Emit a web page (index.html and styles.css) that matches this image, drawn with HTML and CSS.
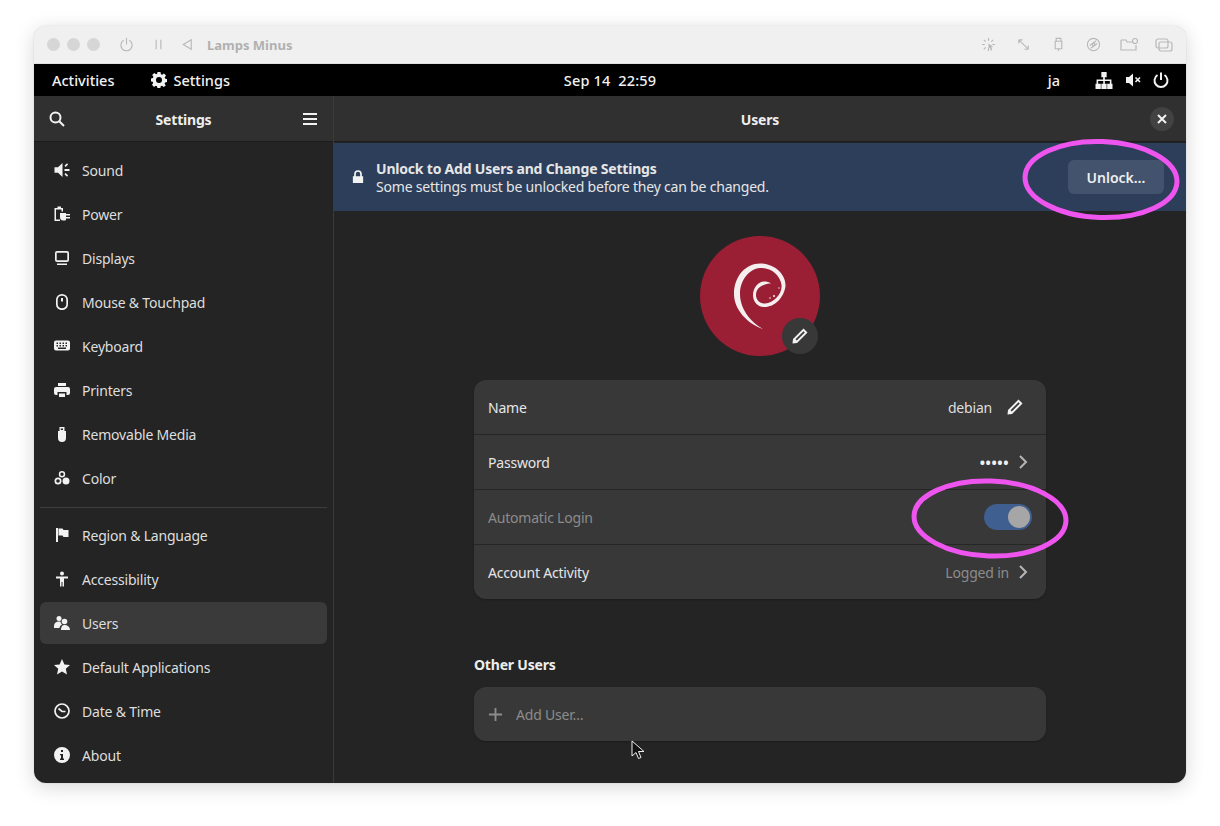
FILE: index.html
```html
<!DOCTYPE html>
<html>
<head>
  <title>Users - Settings</title>
  <link rel="stylesheet" href="styles.css">
</head>
<body>
  <div class="vm-window">
    <div class="vm-bar">
      <span class="light"></span><span class="light"></span><span class="light"></span>
      <svg class="vm-icon first" viewBox="0 0 16 16"><path d="M5 3.500a6 6 0 1 0 6 0M8 1v7"/></svg>
      <svg class="vm-icon pause" viewBox="0 0 16 16"><path d="M5.500 3v10M10.500 3v10"/></svg>
      <svg class="vm-icon back" viewBox="0 0 16 16"><path d="M12 3v10L3.500 8z"/></svg>
      <span class="vm-name">Lamps Minus</span>
      <div class="vm-tools">
        <svg class="vm-icon" viewBox="0 0 16 16"><path d="M8 1v3M8 12v3M1 8h3M12 8h3M3 3l2 2M13 3l-2 2M3 13l2-2"/><path class="solid" d="M8 7l5 3.500-2 .5 1 3-1.500.5-1-3-1.500 1z"/></svg>
        <svg class="vm-icon" viewBox="0 0 16 16"><path d="M3 3l10 10M3 3v4M3 3h4M13 13V9M13 13H9"/></svg>
        <svg class="vm-icon" viewBox="0 0 16 16"><path d="M5.500 1.500h5v3h-5zM4.500 4.500h7v8h-7zM8 12.500V15"/></svg>
        <svg class="vm-icon" viewBox="0 0 16 16"><circle cx="8" cy="8" r="6.500"/><circle cx="8" cy="8" r="1.500"/><path d="M4 9l7-5M5 12l7-5"/></svg>
        <svg class="vm-icon wide" viewBox="0 0 18 16"><path d="M1 3h5l1 2h6M1 3v10h15V8"/><circle cx="15" cy="4" r="2.500"/></svg>
        <svg class="vm-icon wide" viewBox="0 0 18 16"><rect x="1" y="2" width="12" height="9" rx="2"/><rect x="4" y="5" width="13" height="9" rx="2"/></svg>
      </div>
    </div>

    <div class="panel">
      <div class="panel-left">
        <span>Activities</span>
        <span class="panel-app">
          <svg class="icon" viewBox="0 0 16 16"><path fill-rule="evenodd" d="M6.500 0h3l.4 2.200 1.300.6L13 1.500 15 3.600l-1.300 1.800.6 1.300 1.700.3v3l-1.900.4-.5 1.300 1.200 1.800L12.700 15l-1.700-1.200-1.300.5-.3 1.700h-3l-.4-1.800-1.300-.5L3 15l-2-2.200 1.200-1.700-.5-1.300L0 9.500v-3l1.900-.4.500-1.300L1.200 3 3.300 1l1.800 1.300 1.100-.5zM8 5a3 3 0 1 0 0 6 3 3 0 0 0 0-6z"/></svg>
          Settings
        </span>
      </div>
      <div class="panel-clock">Sep 14&nbsp; 22:59</div>
      <div class="panel-right">
        <span class="panel-lang">ja</span>
        <svg class="icon net" viewBox="0 0 16 16"><path d="M5.500 0h5v5H8.800v2H15v4h1v5h-5v-5h2.500V8.500H8.800V11H10.500v5h-5v-5h1.800V8.500H2.500V11H5v5H0v-5h1V7h6.200V5H5.500z"/></svg>
        <svg class="icon mute" viewBox="0 0 16 16"><path d="M8 1.500v13L4 11H1V5h3z"/><path class="mute-x" d="M10.500 5.500L15 10M15 5.500L10.500 10"/></svg>
        <svg class="icon line" viewBox="0 0 16 16"><path d="M4.500 3a6.500 6.500 0 1 0 7 0M8 .5V8"/></svg>
      </div>
    </div>

    <div class="app">
      <aside class="sidebar">
        <header class="side-head">
          <svg class="icon line" viewBox="0 0 16 16"><circle cx="6.500" cy="6.500" r="5"/><path d="M10.200 10.200L15 15"/></svg>
          <span class="head-title">Settings</span>
          <svg class="icon line" viewBox="0 0 16 16"><path d="M1 3h14M1 8h14M1 13h14"/></svg>
        </header>
        <nav class="side-list">
          <a class="side-row"><svg class="icon" viewBox="0 0 16 16"><path d="M8.500 1v14L4 10.800H.5V5.200H4zM10.500 3.800l2.500-2.500 1.100 1.100-2.500 2.500zM10.500 12.200l2.500 2.500 1.100-1.100-2.500-2.500zM10.500 7h5v2h-5z"/></svg>Sound</a>
          <a class="side-row"><svg class="icon" viewBox="0 0 16 16"><path d="M3.500.5H7V2h2v3.500H7.500v-2H2v10h4V15H.5V2h3z"/><path d="M6 7h6v1h4v1.500h-4V11h4v1.500h-4v1c0 .5-.5 1-1 1H9c-2 0-3-1.500-3-3.500z"/></svg>Power</a>
          <a class="side-row"><svg class="icon" viewBox="0 0 16 16"><path fill-rule="evenodd" d="M3 1h10a2 2 0 0 1 2 2v7a2 2 0 0 1-2 2H3a2 2 0 0 1-2-2V3a2 2 0 0 1 2-2zm0 1.700a.4.400 0 0 0-.3.3v7a.4.400 0 0 0 .3.300h10a.4.400 0 0 0 .3-.3V3a.4.400 0 0 0-.3-.3zM3 13.500h10V15H3z"/></svg>Displays</a>
          <a class="side-row"><svg class="icon" viewBox="0 0 16 16"><path fill-rule="evenodd" d="M8 0a6 6 0 0 1 6 5.500v5A5.500 5.500 0 0 1 8 16a5.500 5.500 0 0 1-6-5.500v-5A6 6 0 0 1 8 0zm0 1.700a4.200 4.200 0 0 0-4.300 3.800v5c0 2.200 2 3.800 4.300 3.800s4.300-1.600 4.300-3.800v-5A4.200 4.200 0 0 0 8 1.700zM7 4h2v3.500H7z"/></svg>Mouse &amp; Touchpad</a>
          <a class="side-row"><svg class="icon" viewBox="0 0 16 16"><path fill-rule="evenodd" d="M2 2.500h12a2 2 0 0 1 2 2v6a2 2 0 0 1-2 2H2a2 2 0 0 1-2-2v-6a2 2 0 0 1 2-2zM2.500 4.500v1.500H4V4.500zm3 0v1.500H7V4.500zm3 0v1.500H10V4.500zm3 0v1.500H13V4.500zM2.500 7v1.500H4V7zm3 0v1.500H7V7zm3 0v1.500H10V7zm3 0v1.500H13V7zM4 9.500V11h8V9.500z"/></svg>Keyboard</a>
          <a class="side-row"><svg class="icon" viewBox="0 0 16 16"><path fill-rule="evenodd" d="M4 1h8v3H4zM2 5h12a2 2 0 0 1 2 2v4a2 2 0 0 1-2 2h-1.500v-3h-9v3H2a2 2 0 0 1-2-2V7a2 2 0 0 1 2-2zM5 11.500h6V15H5z"/></svg>Printers</a>
          <a class="side-row"><svg class="icon" viewBox="0 0 16 16"><path fill-rule="evenodd" d="M5.500 1h5v4H12v7a4 4 0 0 1-8 0V5h1.500zM6.800 2.500V4H9V2.500z"/></svg>Removable Media</a>
          <a class="side-row"><svg class="icon" viewBox="0 0 16 16"><path fill-rule="evenodd" d="M8 1a3.200 3.200 0 1 1 0 6.400A3.200 3.200 0 0 1 8 1zm0 1.500a1.700 1.700 0 1 0 0 3.400 1.700 1.700 0 0 0 0-3.400zM4 7.500a3.500 3.500 0 1 1 0 7 3.500 3.500 0 0 1 0-7zm0 1.700a1.800 1.800 0 1 0 0 3.600 1.800 1.800 0 0 0 0-3.600zM12 7.500a3.500 3.500 0 1 1 0 7 3.500 3.500 0 0 1 0-7z"/></svg>Color</a>
          <div class="side-sep"></div>
          <a class="side-row"><svg class="icon" viewBox="0 0 16 16"><path d="M2 1h2v14H2zM4.500 1.500h4l1 1.500h5v7H9.500l-1-1.500h-4z"/></svg>Region &amp; Language</a>
          <a class="side-row"><svg class="icon" viewBox="0 0 16 16"><circle cx="8" cy="2.500" r="2"/><path d="M2 5.500h12V7.500h-4v8H8.500V11h-1v4.500H6v-8H2z"/></svg>Accessibility</a>
          <a class="side-row active"><svg class="icon" viewBox="0 0 16 16"><circle cx="5" cy="3.500" r="2.500"/><circle cx="10.500" cy="6.500" r="2.800"/><path d="M0 11c0-3 2-4.500 5-4.500.5 0 1 0 1.500.2.300 1.300 1 2.300 1.500 2.800-1.500 1-2.500 2-2.500 3.500H0zM7 15c0-3 1-5 3.500-5s5.500 1.500 5.500 5z"/></svg>Users</a>
          <a class="side-row"><svg class="icon" viewBox="0 0 16 16"><path d="M8 0l2.400 5.400 5.600.6-4.200 3.800L13 15.500l-5-3-5 3 1.200-5.700L0 6l5.600-.6z"/></svg>Default Applications</a>
          <a class="side-row"><svg class="icon line thin" viewBox="0 0 16 16"><circle cx="8" cy="8" r="7"/><path d="M4.500 5.500L8 8.500h3.500"/></svg>Date &amp; Time</a>
          <a class="side-row"><svg class="icon" viewBox="0 0 16 16"><path fill-rule="evenodd" d="M8 0a8 8 0 1 1 0 16A8 8 0 0 1 8 0zM7 3v2h2V3zM6 7v1.300h1V11.500H6V13h4v-1.500H9V7z"/></svg>About</a>
        </nav>
      </aside>

      <main class="main">
        <header class="main-head">
          <span class="head-title">Users</span>
          <button class="close-btn"><svg class="icon small line" viewBox="0 0 10 10"><path d="M1 1l8 8M9 1l-8 8"/></svg></button>
        </header>
        <div class="banner">
          <svg class="icon lock" viewBox="0 0 14 16"><path fill-rule="evenodd" d="M7 0a4.500 4.500 0 0 1 4.500 4.500V7H13v8H1V7h1.500V4.500A4.500 4.500 0 0 1 7 0zm0 2a2.500 2.500 0 0 0-2.500 2.500V7h5V4.500A2.500 2.500 0 0 0 7 2z"/></svg>
          <div class="banner-text">
            <strong>Unlock to Add Users and Change Settings</strong>
            <span>Some settings must be unlocked before they can be changed.</span>
          </div>
          <button class="unlock-btn">Unlock…</button>
        </div>

        <div class="content">
          <div class="avatar">
            <svg class="swirl" viewBox="0 0 120 120"><path d="M63 93C48 88 34 74 34 58 34 40 46 27.500 60 27.500 74 27.500 86 38 85.500 50 84 62 74 71.500 64 71 57 71 53 65 53 59 53 52 58 45.500 64 45.500 67 45.500 69 46 71 47.500 66 47.500 56 50 56 59 56 64 60 68 65 67.500 74 66.500 82.500 58 81.500 49 80.500 39.500 71 31 60 32 49 33 40 44 40 58 40 72 50 86 63 93Z"/><circle cx="74" cy="60" r="1"/><circle cx="70" cy="62" r=".8"/><circle cx="79" cy="52" r=".7"/></svg>
            <span class="avatar-edit"><svg class="icon" viewBox="0 0 16 16"><path fill-rule="evenodd" d="M11.500.5l4 4L5 15l-4.500.5L1 11zM11.500 3.200L3.500 11.200l1.300 1.300 8-8z"/></svg></span>
          </div>

          <div class="list">
            <div class="list-row">
              <span>Name</span>
              <span class="row-value name-value">debian
                <svg class="icon" viewBox="0 0 16 16"><path fill-rule="evenodd" d="M11.500.5l4 4L5 15l-4.500.5L1 11zM11.500 3.200L3.500 11.200l1.300 1.300 8-8z"/></svg>
              </span>
            </div>
            <div class="list-row">
              <span>Password</span>
              <span class="row-value"><span class="dots">•••••</span><svg class="chevron" viewBox="0 0 10 16"><path d="M2 2l6 6-6 6"/></svg></span>
            </div>
            <div class="list-row">
              <span class="dim">Automatic Login</span>
              <span class="toggle"><span class="knob"></span></span>
            </div>
            <div class="list-row">
              <span>Account Activity</span>
              <span class="row-value"><span class="dim">Logged in</span><svg class="chevron" viewBox="0 0 10 16"><path d="M2 2l6 6-6 6"/></svg></span>
            </div>
          </div>

          <h2 class="section-title">Other Users</h2>
          <div class="list">
            <div class="list-row add-row">
              <svg class="plus" viewBox="0 0 16 16"><path d="M8 1v14M1 8h14"/></svg>
              <span class="dim">Add User…</span>
            </div>
          </div>
        </div>
      </main>
    </div>
  </div>

  <svg class="marks" viewBox="0 0 1220 826">
    <ellipse cx="1101" cy="179.500" rx="76" ry="38" transform="rotate(2 1101 179.500)"/>
    <ellipse cx="990" cy="518.500" rx="76" ry="37.500" transform="rotate(2 990 518.500)"/>
  </svg>
  <svg class="cursor" viewBox="0 0 14 20"><path d="M1 1v15l4-3.500 2.500 6 2.500-1-2.500-6H13z"/></svg>
</body>
</html>
```

FILE: styles.css
```css
html, body {
  margin: 0;
  height: 826px;
  overflow: hidden;
  background: #fff;
}

body {
  padding: 26px 34px 0;
  box-sizing: border-box;
  font-family: "Noto Sans", sans-serif;
  font-size: 14px;
  letter-spacing: -0.2px;
  color: #e6e6e6;
  position: relative;
}

svg {
  flex: none;
  display: block;
}

.icon {
  width: 16px;
  height: 16px;
  fill: #f2f2f2;
}

.icon.line {
  fill: none;
  stroke: #f2f2f2;
  stroke-width: 2;
}

.icon.thin {
  stroke-width: 1.7;
}

.icon.small {
  width: 10px;
  height: 10px;
}

.vm-window {
  width: 1152px;
  height: 757px;
  border-radius: 12px;
  overflow: hidden;
  display: flex;
  flex-direction: column;
  box-shadow: 0 4px 20px rgba(0, 0, 0, 0.16), 0 0 1px rgba(0, 0, 0, 0.3);
}

/* mac host title bar */
.vm-bar {
  height: 38px;
  box-sizing: border-box;
  flex: none;
  display: flex;
  align-items: center;
  padding: 0 15px 0 13px;
  background: #f0f0f0;
  border-bottom: 1px solid #e0e0e0;
}

.light {
  width: 13px;
  height: 13px;
  border-radius: 50%;
  background: #d6d6d6;
  margin-right: 7px;
}

.vm-icon {
  width: 15px;
  height: 15px;
  fill: none;
  stroke: #b8b8b8;
  stroke-width: 1.2;
}

.vm-icon.wide {
  width: 18px;
  height: 16px;
  margin: 0 -1.5px;
}

.vm-icon .solid {
  fill: #b8b8b8;
  stroke: none;
}

.vm-icon.first {
  margin-left: 12px;
}

.vm-icon.pause {
  margin-left: 17px;
}

.vm-icon.back {
  margin-left: 14px;
}

.vm-name {
  margin-left: 12px;
  font-size: 13px;
  letter-spacing: 0;
  font-weight: 700;
  color: #b0b0b0;
}

.vm-tools {
  margin-left: auto;
  display: flex;
  align-items: center;
  gap: 20px;
}

/* gnome top bar */
.panel {
  height: 32px;
  flex: none;
  display: grid;
  grid-template-columns: 1fr auto 1fr;
  align-items: center;
  background: #000;
  color: #f2f2f2;
  font-size: 14.5px;
  letter-spacing: 0;
  font-weight: 500;
}

.panel-left {
  display: flex;
  align-items: center;
  gap: 37px;
  padding-left: 18px;
}

.panel-app {
  display: flex;
  align-items: center;
  gap: 6px;
}

.panel-clock {
  white-space: pre;
  letter-spacing: 0.15px;
}

.panel-right {
  display: flex;
  align-items: center;
  justify-content: flex-end;
  gap: 12px;
  padding-right: 17px;
}

.panel-lang {
  margin-right: 25px;
}

.net {
  width: 18px;
  height: 17px;
  margin-left: -2px;
}

.mute-x {
  fill: none;
  stroke: #f2f2f2;
  stroke-width: 1.6;
}

.app {
  flex: 1;
  min-height: 0;
  display: flex;
  background: #242424;
}

.sidebar {
  width: 299px;
  flex: none;
  border-right: 1px solid #3a3a3a;
}

.side-head,
.main-head {
  height: 46px;
  box-sizing: border-box;
  display: flex;
  align-items: center;
  background: #303030;
  border-bottom: 1px solid #1c1c1c;
}

.side-head {
  justify-content: space-between;
  padding: 0 15px 0 15px;
}

.head-title {
  padding-top: 1px;
  font-weight: 700;
  color: #eee;
}

.side-list {
  padding: 7px 6px;
  display: flex;
  flex-direction: column;
  gap: 2px;
}

.side-row {
  height: 42px;
  flex: none;
  padding-left: 14px;
  display: flex;
  align-items: center;
  gap: 12px;
  border-radius: 6px;
  color: #dedede;
}

.side-row.active {
  background: #3a3a3a;
}

.side-sep {
  height: 1px;
  margin: 6px 0 4px;
  background: #3d3d3d;
}

.main {
  flex: 1;
  min-width: 0;
}

.main-head {
  justify-content: center;
  position: relative;
}

.close-btn {
  position: absolute;
  right: 12px;
  top: 11px;
  width: 24px;
  height: 24px;
  padding: 0;
  border: 0;
  border-radius: 50%;
  background: #424242;
  display: flex;
  align-items: center;
  justify-content: center;
}

.banner {
  height: 68px;
  margin-top: 1px;
  box-sizing: border-box;
  display: flex;
  align-items: center;
  padding: 0 22px 0 18px;
  background: #2c3e5a;
}

.lock {
  width: 12px;
  height: 14px;
  margin-right: 12px;
}

.banner-text {
  display: flex;
  flex-direction: column;
  padding-top: 2px;
  line-height: 18px;
}

.banner-text strong {
  font-weight: 700;
}

.unlock-btn {
  margin-left: auto;
  width: 96px;
  height: 34px;
  border: 0;
  border-radius: 6px;
  background: #43536d;
  color: #f0f0f0;
  font: 600 14px "Noto Sans", sans-serif;
}

.content {
  width: 572px;
  margin: 0 auto;
  padding-top: 25px;
}

.avatar {
  width: 120px;
  height: 120px;
  margin: 0 auto 24px;
  border-radius: 50%;
  background: #9a1f35;
  position: relative;
}

.swirl {
  width: 120px;
  height: 120px;
  fill: #f4eeee;
}

.avatar-edit {
  position: absolute;
  right: 2px;
  bottom: 2px;
  width: 36px;
  height: 36px;
  border-radius: 50%;
  background: #383838;
  display: flex;
  align-items: center;
  justify-content: center;
}

.list {
  background: #383838;
  border-radius: 12px;
  box-shadow: 0 1px 2px rgba(0, 0, 0, 0.25);
}

.list-row {
  height: 55px;
  box-sizing: border-box;
  display: flex;
  align-items: center;
  justify-content: space-between;
  padding: 0 14px;
  border-bottom: 1px solid #262626;
}

.list-row:last-child {
  height: 54px;
  border-bottom: 0;
}

.row-value {
  display: flex;
  align-items: center;
  gap: 9px;
  color: #dedede;
  padding-right: 4px;
}

.name-value {
  gap: 15px;
  padding-right: 9px;
}

.dots {
  font-size: 14px;
  letter-spacing: 0.6px;
  font-weight: 700;
  color: #f0f0f0;
}

.chevron {
  width: 10px;
  height: 16px;
  fill: none;
  stroke: #b5b5b5;
  stroke-width: 2;
}

.dim {
  color: #8c8c8c;
}

.toggle {
  width: 48px;
  height: 26px;
  border-radius: 13px;
  background: #3f5f91;
  display: flex;
  align-items: center;
  justify-content: flex-end;
  padding-right: 2px;
  box-sizing: border-box;
}

.knob {
  width: 22px;
  height: 22px;
  border-radius: 50%;
  background: #a6a6a6;
}

.section-title {
  margin: 56px 0 12px;
  font-size: 14px;
  line-height: 20px;
  font-weight: 700;
  color: #eee;
}

.add-row {
  justify-content: flex-start;
  gap: 13px;
}

.plus {
  width: 15px;
  height: 15px;
  fill: none;
  stroke: #8c8c8c;
  stroke-width: 2;
}

/* annotation drawn on top of the screenshot */
.marks {
  position: absolute;
  left: 0;
  top: 0;
  width: 1220px;
  height: 826px;
  fill: none;
  stroke: #ee55ee;
  stroke-width: 5;
}

.cursor {
  position: absolute;
  left: 631px;
  top: 740px;
  width: 14px;
  height: 20px;
  fill: #111;
  stroke: #eee;
  stroke-width: 1;
}
```
